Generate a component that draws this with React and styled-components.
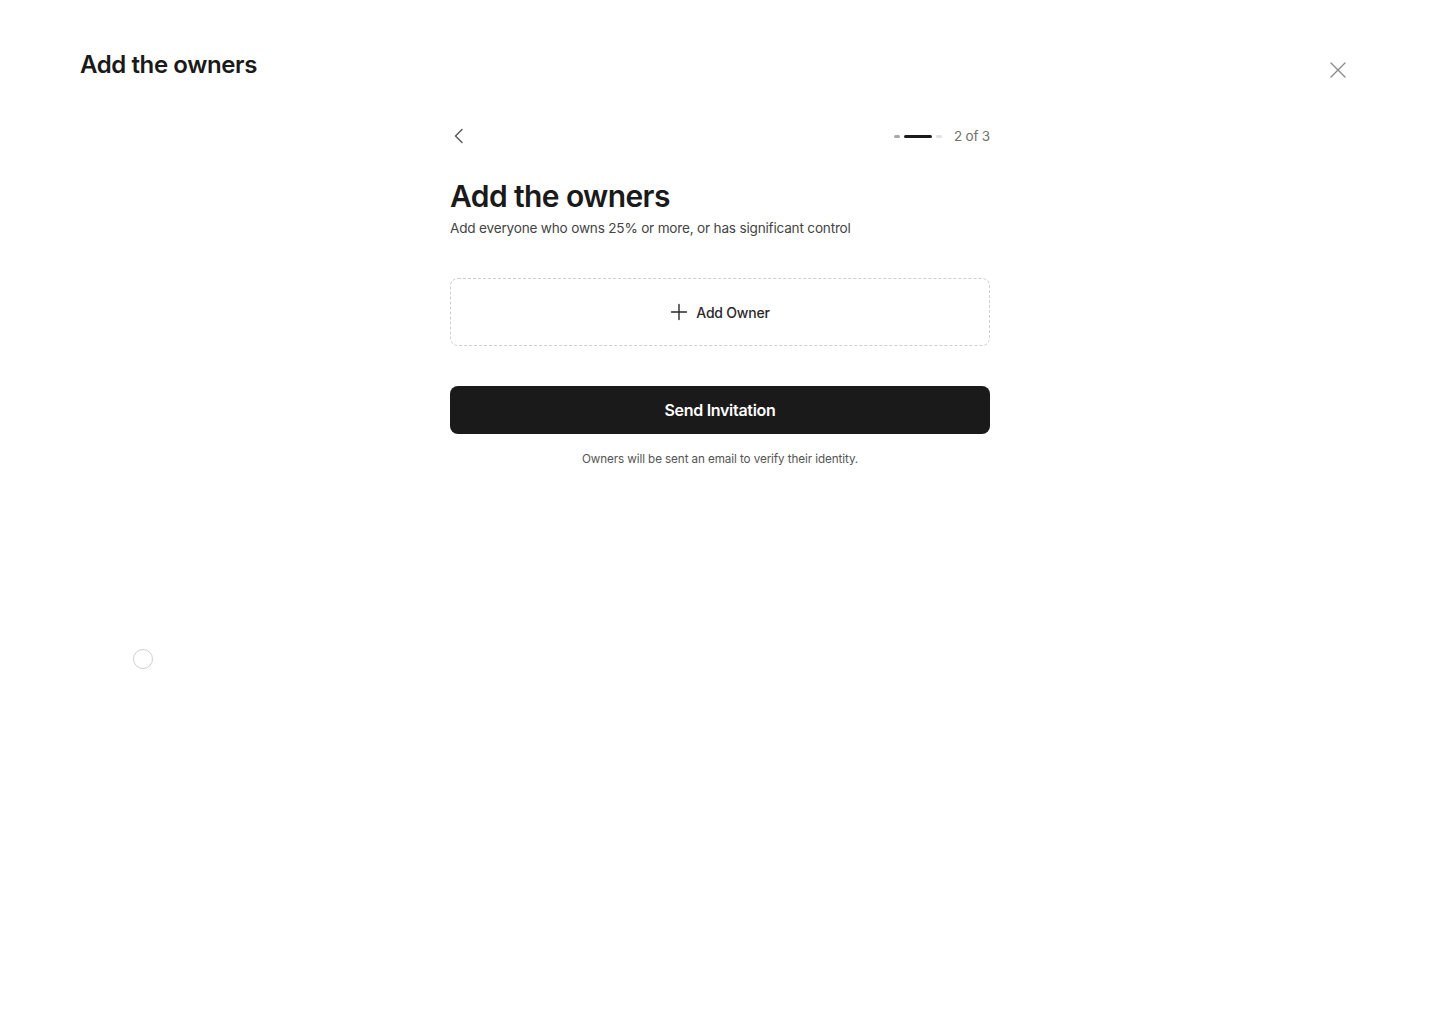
import React from 'react'
import styled, { createGlobalStyle } from 'styled-components'

const GlobalStyle = createGlobalStyle`
  html, body {
    margin: 0;
    padding: 0;
    background: #ffffff;
  }
  body {
    font-family: Inter, "Noto Sans", sans-serif;
    color: #1a1a1a;
    -webkit-font-smoothing: antialiased;
  }
`

const Page = styled.main`
  position: relative;
  width: 1440px;
  min-height: 1024px;
  box-sizing: border-box;
  padding: 44px 80px 0 80px;
`

const Header = styled.header`
  display: flex;
  justify-content: space-between;
  align-items: center;
`

const PageTitle = styled.h1`
  margin: 0;
  font-size: 24px;
  font-weight: 600;
  letter-spacing: -0.4px;
  line-height: 32px;
`

const CloseButton = styled.button`
  display: flex;
  align-items: center;
  justify-content: center;
  width: 32px;
  height: 32px;
  margin: 10px 6px 0 0;
  padding: 0;
  border: none;
  background: none;
  color: #8a8a8a;
  cursor: pointer;
`

const Content = styled.section`
  width: 540px;
  margin: 38px auto 0 auto;
  display: flex;
  flex-direction: column;
`

const TopRow = styled.div`
  display: flex;
  justify-content: space-between;
  align-items: center;
  height: 24px;
`

const BackButton = styled.button`
  display: flex;
  align-items: center;
  padding: 0;
  border: none;
  background: none;
  color: #555;
  cursor: pointer;
`

const Progress = styled.div`
  display: flex;
  align-items: center;
  gap: 12px;
`

const Steps = styled.div`
  display: flex;
  align-items: center;
  gap: 4px;
`

const Step = styled.span`
  display: block;
  height: 3px;
  border-radius: 2px;
  width: ${p => (p.$active ? '28px' : '6px')};
  background: ${p => (p.$active ? '#1a1a1a' : p.$done ? '#a8a8a8' : '#e2e2e2')};
`

const StepLabel = styled.span`
  font-size: 13.5px;
  color: #707070;
  letter-spacing: -0.2px;
`

const Title = styled.h2`
  margin: 29px 0 0 0;
  font-size: 30px;
  font-weight: 600;
  letter-spacing: -0.6px;
  line-height: 38px;
`

const Subtitle = styled.p`
  margin: 3px 0 0 0;
  font-size: 13.6px;
  color: #444;
  letter-spacing: -0.2px;
  line-height: 20px;
`

const AddBox = styled.button`
  margin-top: 40px;
  height: 68px;
  display: flex;
  align-items: center;
  justify-content: center;
  gap: 8px;
  border: 1px dashed #cfcfcf;
  border-radius: 8px;
  background: #fff;
  font-family: inherit;
  font-size: 14px;
  font-weight: 500;
  color: #2a2a2a;
  letter-spacing: -0.2px;
  cursor: pointer;
`

const PrimaryButton = styled.button`
  margin-top: 40px;
  height: 48px;
  border: none;
  border-radius: 8px;
  background: #1a1a1a;
  color: #fff;
  font-family: inherit;
  font-size: 16px;
  font-weight: 600;
  letter-spacing: -0.3px;
  cursor: pointer;
`

const Note = styled.p`
  margin: 16px 0 0 0;
  text-align: center;
  font-size: 11.7px;
  color: #555;
  letter-spacing: -0.1px;
  line-height: 18px;
`

const CursorRing = styled.span`
  position: absolute;
  left: 133px;
  top: 649px;
  width: 18px;
  height: 18px;
  border: 1px solid #cfcfcf;
  border-radius: 50%;
`

function App () {
  return (
    <>
      <GlobalStyle />
      <Page>
        <Header>
          <PageTitle>Add the owners</PageTitle>
          <CloseButton aria-label="Close">
            <svg width="18" height="18" viewBox="0 0 18 18" fill="none" stroke="currentColor" strokeWidth="1.4" strokeLinecap="round">
              <path d="M2 2L16 16M16 2L2 16" />
            </svg>
          </CloseButton>
        </Header>

        <Content>
          <TopRow>
            <BackButton aria-label="Back">
              <svg width="18" height="18" viewBox="0 0 18 18" fill="none" stroke="currentColor" strokeWidth="1.4" strokeLinecap="round" strokeLinejoin="round">
                <path d="M12 2.5L5.5 9L12 15.5" />
              </svg>
            </BackButton>
            <Progress>
              <Steps>
                <Step $done />
                <Step $active />
                <Step />
              </Steps>
              <StepLabel>2 of 3</StepLabel>
            </Progress>
          </TopRow>

          <Title>Add the owners</Title>
          <Subtitle>Add everyone who owns 25% or more, or has significant control</Subtitle>

          <AddBox>
            <svg width="18" height="18" viewBox="0 0 18 18" fill="none" stroke="currentColor" strokeWidth="1.4" strokeLinecap="round">
              <path d="M9 1.5V16.5M1.5 9H16.5" />
            </svg>
            Add Owner
          </AddBox>

          <PrimaryButton>Send Invitation</PrimaryButton>
          <Note>Owners will be sent an email to verify their identity.</Note>
        </Content>

        <CursorRing />
      </Page>
    </>
  )
}

export default App
